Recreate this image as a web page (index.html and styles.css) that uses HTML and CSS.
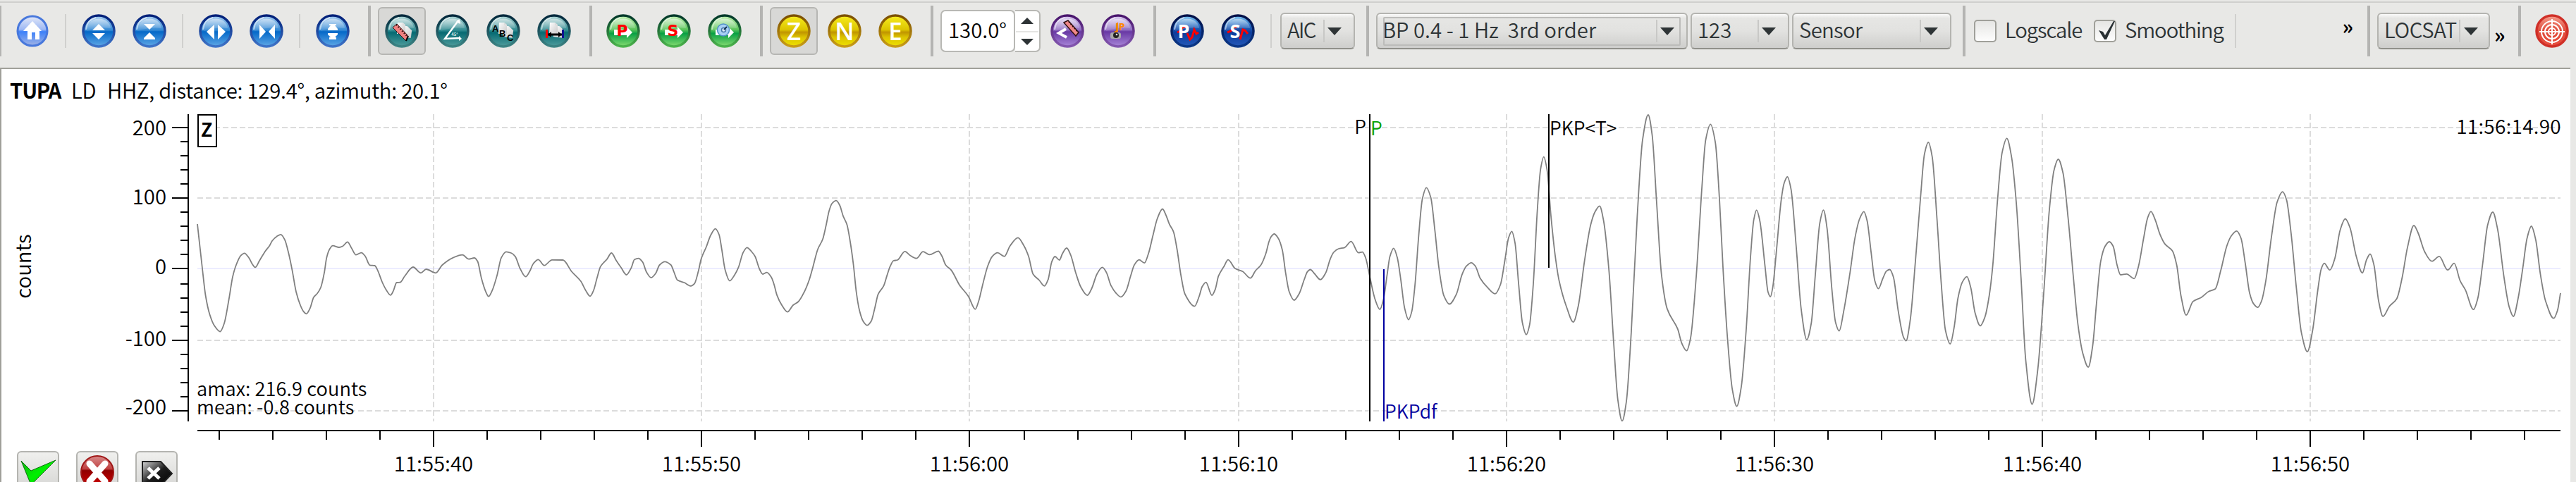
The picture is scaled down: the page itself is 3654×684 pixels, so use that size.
FILE: index.html
```html
<!DOCTYPE html>
<html lang="en">
<head>
    <meta charset="UTF-8">
    <meta name="viewport" content="width=device-width, initial-scale=1.0">
    <title>Picker - TUPA</title>
    <link rel="stylesheet" href="styles.css">
</head>
<body>

    <!-- shared gradients and icon parts -->
    <svg class="defs" width="0" height="0">
        <defs>
            <linearGradient id="gBlue" x1="0" y1="0" x2="0" y2="1">
                <stop offset="0" stop-color="#a9cdf0"/><stop offset=".48" stop-color="#3288d4"/>
                <stop offset=".52" stop-color="#0468c8"/><stop offset="1" stop-color="#5fa8e6"/>
            </linearGradient>
            <linearGradient id="rBlue" x1="0" y1="0" x2="0" y2="1">
                <stop offset="0" stop-color="#001f78"/><stop offset="1" stop-color="#3f74c8"/>
            </linearGradient>
            <linearGradient id="gHome" x1="0" y1="0" x2="0" y2="1">
                <stop offset="0" stop-color="#e4e9f8"/><stop offset=".45" stop-color="#9db8f4"/>
                <stop offset=".52" stop-color="#3b80fa"/><stop offset="1" stop-color="#a3b4e4"/>
            </linearGradient>
            <linearGradient id="gTeal" x1="0" y1="0" x2="0" y2="1">
                <stop offset="0" stop-color="#b4d8d8"/><stop offset=".48" stop-color="#2f8a90"/>
                <stop offset=".55" stop-color="#066a72"/><stop offset="1" stop-color="#4f9c9c"/>
            </linearGradient>
            <linearGradient id="rTeal" x1="0" y1="0" x2="0" y2="1">
                <stop offset="0" stop-color="#02283c"/><stop offset="1" stop-color="#3c8484"/>
            </linearGradient>
            <linearGradient id="gGreen" x1="0" y1="0" x2="0" y2="1">
                <stop offset="0" stop-color="#c4f0b4"/><stop offset=".45" stop-color="#5cc45c"/>
                <stop offset=".58" stop-color="#0aa044"/><stop offset="1" stop-color="#84dc70"/>
            </linearGradient>
            <linearGradient id="rGreen" x1="0" y1="0" x2="0" y2="1">
                <stop offset="0" stop-color="#02382a"/><stop offset="1" stop-color="#4cb44c"/>
            </linearGradient>
            <linearGradient id="gYellow" x1="0" y1="0" x2="0" y2="1">
                <stop offset="0" stop-color="#f8ee20"/><stop offset=".46" stop-color="#dcc400"/>
                <stop offset=".54" stop-color="#c09400"/><stop offset=".7" stop-color="#dcc400"/>
                <stop offset="1" stop-color="#eee000"/>
            </linearGradient>
            <linearGradient id="rYellow" x1="0" y1="0" x2="0" y2="1">
                <stop offset="0" stop-color="#7c5000"/><stop offset="1" stop-color="#c89c18"/>
            </linearGradient>
            <linearGradient id="gPurple" x1="0" y1="0" x2="0" y2="1">
                <stop offset="0" stop-color="#dccdf0"/><stop offset=".46" stop-color="#9472c4"/>
                <stop offset=".52" stop-color="#6838a4"/><stop offset="1" stop-color="#a886d8"/>
            </linearGradient>
            <linearGradient id="rPurple" x1="0" y1="0" x2="0" y2="1">
                <stop offset="0" stop-color="#48146c"/><stop offset="1" stop-color="#8458b0"/>
            </linearGradient>
            <linearGradient id="gNavy" x1="0" y1="0" x2="0" y2="1">
                <stop offset="0" stop-color="#80c8f4"/><stop offset=".3" stop-color="#2c70c4"/>
                <stop offset=".55" stop-color="#0c3c9c"/><stop offset="1" stop-color="#2458b8"/>
            </linearGradient>
            <linearGradient id="rNavy" x1="0" y1="0" x2="0" y2="1">
                <stop offset="0" stop-color="#001048"/><stop offset="1" stop-color="#0c3888"/>
            </linearGradient>
            <linearGradient id="gRed" x1="0" y1="0" x2="0" y2="1">
                <stop offset="0" stop-color="#f4a090"/><stop offset=".5" stop-color="#e04838"/>
                <stop offset="1" stop-color="#e85040"/>
            </linearGradient>
            <linearGradient id="gCancel" x1="0" y1="0" x2="0" y2="1">
                <stop offset="0" stop-color="#d88c8c"/><stop offset=".4" stop-color="#c04040"/>
                <stop offset=".45" stop-color="#900000"/><stop offset="1" stop-color="#d80000"/>
            </linearGradient>
            <linearGradient id="gCheck" x1="0" y1="0" x2="1" y2="1">
                <stop offset="0" stop-color="#10b010"/><stop offset=".5" stop-color="#00f000"/>
                <stop offset="1" stop-color="#00c800"/>
            </linearGradient>
            <linearGradient id="gSkip" x1="0" y1="0" x2="1" y2="1">
                <stop offset="0" stop-color="#d8d8d8"/><stop offset=".5" stop-color="#1c1c1c"/>
                <stop offset="1" stop-color="#000"/>
            </linearGradient>
            <linearGradient id="gPaper" x1="0" y1="0" x2="1" y2="1">
                <stop offset="0" stop-color="#fff"/><stop offset="1" stop-color="#c8c8c8"/>
            </linearGradient>
            <linearGradient id="gloss" x1="0" y1="0" x2="0" y2="1">
                <stop offset="0" stop-color="#fff" stop-opacity=".5"/>
                <stop offset="1" stop-color="#fff" stop-opacity=".06"/>
            </linearGradient>
            <g id="gl">
                <path d="M7 24C7 13 14 6.500 24 6.500S41 13 41 20Q24 18 7 24Z" fill="url(#gloss)"/>
                <path d="M6 22C7 13 12 7 20 5" fill="none" stroke="#fff" stroke-opacity=".6" stroke-width="2"/>
            </g>
            <g id="oBlue"><circle cx="24" cy="24" r="22" fill="url(#gBlue)" stroke="url(#rBlue)" stroke-width="3.500"/><use href="#gl"/></g>
            <g id="oTeal"><circle cx="24" cy="24" r="22" fill="url(#gTeal)" stroke="url(#rTeal)" stroke-width="3.500"/><use href="#gl"/></g>
            <g id="oGreen"><circle cx="24" cy="24" r="22" fill="url(#gGreen)" stroke="url(#rGreen)" stroke-width="3.500"/><use href="#gl"/></g>
            <g id="oYellow"><circle cx="24" cy="24" r="22" fill="url(#gYellow)" stroke="url(#rYellow)" stroke-width="3.500"/></g>
            <g id="oPurple"><circle cx="24" cy="24" r="22" fill="url(#gPurple)" stroke="url(#rPurple)" stroke-width="3.500"/><use href="#gl"/></g>
            <g id="oNavy"><circle cx="24" cy="24" r="22" fill="url(#gNavy)" stroke="url(#rNavy)" stroke-width="3.500"/><use href="#gl"/></g>
            <g id="paper">
                <path d="M24 17h7l7 5v11h-14z" fill="url(#gPaper)" transform="rotate(8 30 24)"/>
                <path d="M18 12h7l4 3v13H17z" fill="url(#gPaper)"/>
                <path d="M25 12l4 4h-4z" fill="#ddd"/>
            </g>
        </defs>
    </svg>

    <div class="toolbar">
        <div class="handle first"></div>
        <button class="tool"><svg viewBox="0 0 48 48">
            <circle cx="24" cy="24" r="21" fill="url(#gHome)" stroke="#4878dc" stroke-width="3"/>
            <path d="M24 10L37 24h-3v12h-6V26h-5v10h-6V24h-6z" fill="#fff"/></svg></button>
        <div class="sep"></div>
        <button class="tool"><svg viewBox="0 0 48 48"><use href="#oBlue"/>
            <path d="M15 23l9-9 9 9zM15 27h18l-9 9z" fill="#fff"/></svg></button>
        <button class="tool"><svg viewBox="0 0 48 48"><use href="#oBlue"/>
            <path d="M16 14h16l-8 8zM24 26l8 8v2H16v-2z" fill="#fff"/></svg></button>
        <div class="sep"></div>
        <button class="tool"><svg viewBox="0 0 48 48"><use href="#oBlue"/>
            <path d="M22 15v21L11 25zM27 15v21l11-11z" fill="#fff"/></svg></button>
        <button class="tool"><svg viewBox="0 0 48 48"><use href="#oBlue"/>
            <path d="M14 15l9 10-9 10zM36 15l-9 10 9 10z" fill="#fff"/></svg></button>
        <div class="sep"></div>
        <button class="tool"><svg viewBox="0 0 48 48"><use href="#oBlue"/>
            <path d="M19 14h10v2h-2l4 5v2H17v-2l4-5h-2zM17 27h14v2l-4 4h2v3H19v-3h2l-4-4z" fill="#fff"/></svg></button>

        <div class="handle"></div>
        <button class="tool checked"><svg viewBox="0 0 48 48"><use href="#oTeal"/><use href="#paper"/>
            <path d="M11 19l6-5 16 17-3 7z" fill="#f08080" stroke="#401010" stroke-width="1"/>
            <path d="M16 15l16 17" stroke="#200" stroke-width="2" stroke-dasharray="1.500 2.500"/>
            <path d="M30 38l3-7" stroke="#000" stroke-width="2"/></svg></button>
        <button class="tool"><svg viewBox="0 0 48 48"><use href="#oTeal"/>
            <path d="M33 8L13 35l22-1" fill="none" stroke="#fff" stroke-width="2.400"/>
            <path d="M29 11l5-4 1 7zM33 31l4 4-4 3z" fill="#fff"/>
            <text x="27" y="31" class="tiny">45°</text></svg></button>
        <button class="tool"><svg viewBox="0 0 48 48"><use href="#oTeal"/><use href="#paper"/>
            <text x="8" y="25" class="abc">A</text><text x="18" y="32" class="abc">B</text><text x="29" y="38" class="abc">C</text></svg></button>
        <button class="tool"><svg viewBox="0 0 48 48"><use href="#oTeal"/><use href="#paper"/>
            <path d="M15 29h20" stroke="#000" stroke-width="3"/>
            <path d="M15 29l5-4v8zM35 29l-5-4v8z"/>
            <path d="M13.500 22v12" stroke="#f00" stroke-width="3"/><path d="M36.500 22v12" stroke="#101090" stroke-width="3"/></svg></button>

        <div class="handle"></div>
        <button class="tool"><svg viewBox="0 0 48 48"><use href="#oGreen"/>
            <path d="M11 22h18v-4l8 8-8 8v-4H11z" fill="#fff"/><text x="22.500" y="30.500" class="letter red">P</text></svg></button>
        <button class="tool"><svg viewBox="0 0 48 48"><use href="#oGreen"/>
            <path d="M11 22h18v-4l8 8-8 8v-4H11z" fill="#fff"/><text x="22.500" y="30.500" class="letter red">S</text></svg></button>
        <button class="tool"><svg viewBox="0 0 48 48"><use href="#oGreen"/>
            <path d="M11 22h18v-4l8 8-8 8v-4H11z" fill="#fff"/>
            <circle cx="22" cy="22.500" r="8.500" fill="#a8d0f4" stroke="#5090c8" stroke-width="1.500"/>
            <circle cx="22.500" cy="22.500" r="3" fill="#dceeff" stroke="#4878a8" stroke-width="1.500"/>
            <path d="M23 22l4-4" stroke="#103050" stroke-width="2"/></svg></button>

        <div class="handle"></div>
        <button class="tool checked"><svg viewBox="0 0 48 48"><use href="#oYellow"/><text x="24" y="37" class="comp">Z</text></svg></button>
        <button class="tool"><svg viewBox="0 0 48 48"><use href="#oYellow"/><text x="24" y="37" class="comp">N</text></svg></button>
        <button class="tool"><svg viewBox="0 0 48 48"><use href="#oYellow"/><text x="24" y="37" class="comp">E</text></svg></button>

        <div class="handle"></div>
        <div class="spin">
            <span class="value">130.0°</span>
            <div class="steps">
                <svg viewBox="0 0 18 9"><path d="M0 9L9 0l9 9z"/></svg>
                <svg viewBox="0 0 18 9"><path d="M0 0h18L9 9z"/></svg>
            </div>
        </div>
        <button class="tool"><svg viewBox="0 0 48 48"><use href="#oPurple"/>
            <path d="M22 21l-10 6 11 6" fill="none" stroke="#fff" stroke-width="4"/>
            <path d="M19 12l6-3 15 17-4 5z" fill="#f08888" stroke="#301010" stroke-width="1.500"/>
            <path d="M26 11l13 15" stroke="#200" stroke-width="1.500" stroke-dasharray="1.500 2.500"/></svg></button>
        <button class="tool"><svg viewBox="0 0 48 48"><use href="#oPurple"/>
            <path d="M23 12v13" stroke="#ff8800" stroke-width="2"/><text x="20" y="23" class="jp">JP</text>
            <rect x="13" y="26" width="15" height="9" rx="3" fill="#a8a8a8"/>
            <circle cx="21" cy="30" r="4" fill="#222"/><circle cx="22" cy="29" r="1.300" fill="#fff"/></svg></button>

        <div class="handle"></div>
        <button class="tool"><svg viewBox="0 0 48 48"><use href="#oNavy"/>
            <path d="M10 26l4-2 4-6 5 1M24 27l4 9 3-3 3-11 3 6 3-2" class="wiggle"/>
            <text x="19" y="34" class="pick">P</text></svg></button>
        <button class="tool"><svg viewBox="0 0 48 48"><use href="#oNavy"/>
            <path d="M9 26l5-2 4-6 4 1M27 36l4-14 3 1 4 5" class="wiggle"/>
            <text x="20" y="34" class="pick">S</text></svg></button>
        <div class="sep"></div>
        <div class="combo w-aic"><span>AIC</span><i></i><b></b></div>

        <div class="handle"></div>
        <div class="combo w-filter focus"><span>BP 0.4 - 1 Hz&nbsp; 3rd order</span><i></i><b></b></div>
        <div class="combo w-unit"><span>123</span><i></i><b></b></div>
        <div class="combo w-sensor"><span>Sensor</span><i></i><b></b></div>

        <div class="handle"></div>
        <label class="check log"><span class="box"></span><span class="name">Logscale</span></label>
        <label class="check smooth"><span class="box"><svg viewBox="0 0 32 32">
            <path d="M7 15l6 2 3 5L28 2h2L18 28h-3z" fill="#2a3134"/></svg></span><span class="name">Smoothing</span></label>
        <div class="sep"></div>
        <div class="more">»</div>

        <div class="handle"></div>
        <div class="combo w-loc"><span>LOCSAT</span><i></i><b></b></div>
        <div class="more low">»</div>

        <div class="handle"></div>
        <button class="tool"><svg viewBox="0 0 48 48">
            <circle cx="24" cy="24" r="22" fill="url(#gRed)" stroke="#d03028" stroke-width="3.500"/>
            <g fill="none" stroke="#fff" stroke-width="2"><circle cx="24" cy="25" r="15"/><circle cx="24" cy="25" r="10"/>
            <circle cx="24" cy="25" r="5"/><path d="M24 7v36M6 25h36"/></g></svg></button>
    </div>

    <div class="panel">
        <div class="station"><strong>TUPA</strong><span>LD</span><span>HHZ, distance: 129.4°, azimuth: 20.1°</span></div>
        <!-- the plot is filled in by plot.js -->
        <svg class="plot" id="plot" width="3644" height="586" viewBox="2 98 3644 586"></svg>
        <div class="actions">
            <button class="action"><svg viewBox="0 0 56 56">
                <path d="M4 12l14 14L53 11 18 46z" fill="url(#gCheck)" stroke="#107010" stroke-width="1"/></svg></button>
            <button class="action"><svg viewBox="0 0 56 56">
                <circle cx="28" cy="28" r="23" fill="url(#gCancel)" stroke="#a01818" stroke-width="2"/>
                <path d="M17 16l22 25M39 16L17 41" stroke="#fff" stroke-width="9" stroke-linecap="round"/></svg></button>
            <button class="action"><svg viewBox="0 0 56 56">
                <path d="M8 13h26l16 17-16 17H8z" fill="url(#gSkip)" stroke="#222" stroke-width="2"/>
                <path d="M16 22l16 15M32 22L16 37" stroke="#fff" stroke-width="5"/></svg></button>
        </div>
    </div>

    <script src="plot.js"></script>
</body>
</html>
```
FILE: styles.css
```css
* {
    box-sizing: border-box;
}
body {
    margin: 0;
    width: 3654px;
    height: 684px;
    overflow: hidden;
    background: #e8e8e6;
    color: #2e3436;
    font-family: "Noto Sans CJK SC", "Noto Sans", sans-serif;
    font-size: 29.33px;
    font-weight: 350;
    line-height: 36px;
}
.defs {
    display: block;
}
button {
    border: none;
    background: none;
    padding: 0;
    font: inherit;
}

/* toolbar */
.toolbar {
    display: flex;
    align-items: center;
    gap: 4px;
    height: 96px;
    padding: 2px 0 10px;
    background: linear-gradient(#cfcfcd, #cfcfcd) 0 2px / 100% 2px no-repeat;
}
.handle {
    flex: none;
    width: 4px;
    height: 72px;
    margin: 0 6px 0 12px;
    background: #b4b4b2;
}
.handle.first {
    width: 2px;
    margin-left: 0;
}
.sep {
    flex: none;
    width: 2px;
    height: 48px;
    margin: 0 8px;
    background: #d0d0ce;
}
.tool {
    flex: none;
    display: flex;
    align-items: center;
    justify-content: center;
    width: 68px;
    height: 68px;
}
.tool svg {
    width: 48px;
    height: 48px;
}
.tool.checked {
    background: #d8d8d6;
    border: 2px solid #b6b6b3;
    border-radius: 6px;
}
.tool text {
    text-anchor: middle;
    font-weight: bold;
}
.tool .letter {
    font: bold 22px "DejaVu Sans", sans-serif;
}
.tool .red {
    fill: #f00;
}
.tool .comp {
    font: 600 35px "Open Sans", sans-serif;
    fill: #fff;
}
.tool .pick {
    font: bold 27px "Open Sans", sans-serif;
    fill: #fff;
}
.tool .abc {
    text-anchor: start;
    font: bold 13px "Liberation Sans", sans-serif;
}
.tool .tiny {
    font-size: 6px;
    fill: #cfe4e4;
}
.tool .jp {
    text-anchor: start;
    font: bold 14px "Open Sans", sans-serif;
    fill: #ff8800;
}
.tool .wiggle {
    fill: none;
    stroke: #f00;
    stroke-width: 3;
}

/* spin box */
.spin {
    flex: none;
    display: flex;
    width: 142px;
    height: 60px;
    color: #000;
}
.spin .value {
    width: 106px;
    padding: 7px 0 0 9px;
    border: 2px solid #b8b8b4;
    border-radius: 7px;
    background: #fff;
}
.spin .steps {
    display: flex;
    flex-direction: column;
    align-items: center;
    justify-content: space-between;
    width: 36px;
    padding: 9px 0 8px;
    border: 2px solid #b8b8b4;
    border-left: none;
    border-radius: 0 7px 7px 0;
    background: linear-gradient(#e4e4e2, #e4e4e2) 50% 28px / 32px 2px no-repeat #fff;
}
.spin svg {
    width: 18px;
    height: 9px;
    fill: #2e3436;
}

/* combo boxes */
.combo {
    flex: none;
    display: flex;
    align-items: center;
    height: 52px;
    padding: 0 17px 0 8px;
    border: 2px solid #b4b4b0;
    border-bottom-color: #90908a;
    border-radius: 6px;
    background: linear-gradient(#fafafa, #e6e6e4 12%, #e2e2e0 50%, #cececc);
    position: relative;
    white-space: pre;
}
.combo span {
    flex: 1;
    width: 0;
    margin-top: -6px;
}
.combo i {
    width: 2px;
    height: 32px;
    margin-right: 4px;
    background: #c8c8c6;
}
.combo b {
    border: 10px solid transparent;
    border-top: 11px solid #2e3436;
    border-bottom: none;
}
.combo.focus::after {
    content: "";
    position: absolute;
    inset: 4px 8px 3px;
    border: 2px solid #bcbcba;
    border-radius: 2px;
}
.w-aic {
    width: 106px;
    letter-spacing: -1.6px;
}
.w-filter {
    width: 442px;
}
.w-filter span {
    margin-left: -1px;
}
.w-unit {
    width: 140px;
}
.w-sensor {
    width: 226px;
    letter-spacing: -.7px;
}
.w-loc {
    width: 160px;
    padding-right: 15px;
    letter-spacing: -.4px;
}
.w-loc i {
    margin-right: 5px;
}

/* check boxes */
.check {
    flex: none;
    display: flex;
    align-items: center;
    gap: 12px;
    line-height: 32px;
    letter-spacing: -1.1px;
}
.check .name {
    margin-top: -7px;
}
.check.log {
    width: 166px;
    margin-left: 2px;
}
.check.smooth {
    width: 188px;
}
.box {
    width: 32px;
    height: 32px;
    border: 2px solid #a0a09a;
    border-radius: 5px;
    background: linear-gradient(#e6e6e4, #fdfdfd);
}
.box svg {
    display: block;
    margin: -2px;
    width: 32px;
    height: 32px;
}
.more {
    width: 167px;
    margin-top: -16px;
    padding-right: 4px;
    text-align: right;
    color: #000;
    font-weight: bold;
}
.more.low {
    width: 21px;
    margin-top: 8px;
    padding: 0 0 0 2px;
    text-align: left;
}

/* trace panel */
.panel {
    width: 3646px;
    height: 588px;
    border: 2px solid #a0a09a;
    border-right: none;
    border-bottom: none;
    background: #fff;
    color: #000;
    position: relative;
}
.station {
    position: absolute;
    left: 12px;
    top: 11px;
    display: flex;
    white-space: pre;
    letter-spacing: -.25px;
}
.station strong {
    width: 87px;
    letter-spacing: -1.2px;
}
.station span:nth-child(2) {
    width: 51px;
}
.plot {
    display: block;
}
.plot text {
    fill: #000;
}
.plot .small {
    font-size: 26.67px;
}
.plot .note {
    font-size: 27.2px;
    letter-spacing: .1px;
}
.plot .clock {
    font-size: 28px;
    letter-spacing: .3px;
}
.plot .end {
    text-anchor: end;
}
.plot .mid {
    text-anchor: middle;
}
.plot .bold {
    font-weight: bold;
}
.plot .green {
    fill: #00a000;
}
.plot .blue {
    fill: #0000a0;
}
.plot .grid {
    fill: none;
    stroke: #dcdcdc;
    stroke-width: 2;
    stroke-dasharray: 8 4;
}
.plot .zero {
    stroke: #ececff;
    stroke-width: 2;
}
.plot .axis {
    fill: none;
    stroke: #000;
    stroke-width: 2;
}
.plot .theo {
    stroke: #0000a0;
    stroke-width: 2;
}
.plot .trace {
    fill: none;
    stroke: #808080;
    stroke-width: 1.800;
}
.actions {
    position: absolute;
    left: 22px;
    top: 542px;
    display: flex;
    gap: 24px;
}
.action {
    width: 60px;
    height: 60px;
    border: 2px solid #b4b4b0;
    border-radius: 6px;
    background: linear-gradient(#f0f0ee, #d4d4d2);
}
.action svg {
    display: block;
    width: 56px;
    height: 56px;
}
```
FILE: plot.js
```js
const plot = document.getElementById('plot');

// trace samples as x,y pairs
const samples = `280,318 287,381 291.6,419.5 297.4,446 304,462 312.3,470.5 318,459 325,423 330,393 335,376 341.6,362.7 346.7,359.3 353,365.8 358,375 362,379.4
368,370 376.6,356 382.3,348.7 386.3,341.5 392.7,335.5 398.4,332.8 404,340.4 409.3,359 414.5,383.6 420,414 426,433 430.5,442 434.6,445.3 439.7,437.7 445,421.8
450,416.5 455,408 460,387 463.3,365.8 467.3,354 472,348.7 481,351 486,349.5 493,343.4 498.3,351.4 505,361.6 512.6,358.6 518,363.5 524.7,376.4 531.6,377
536,384.3 542,400 547.6,411 554,418.8 558,412.7 562.6,401 567.7,400.6 574,392 586,379 597,387.3 604.5,382 618,387.3 627.4,376 642.4,365.8 656,361.6
664.8,367.7 672.8,366 677.4,370.7 683,395.3 689,413.9 693,420.7 698,412.7 705,391 711,365.8 718,357.4 725,359 730.8,363.9 737.7,381 745.7,392.7
751,385.8 756.6,374 763.5,368.4 772,376.7 783,368.8 798.5,369 811,385.5 823.8,399 830.7,412 837,420.3 842,412 846.7,395 852,377.9 861,367.7
867.4,359 874,369.5 881,379.8 888.6,390 895.5,379.8 900,368.3 905.7,366.6 911.5,371.8 917,386 923.5,394 930,388 935.6,376 943,371.4 951.7,376
956,386 961,397.5 970.6,401 980,405.8 985,402.7 990.7,384.6 994.7,367 1002,350 1008,334 1014.8,324.6 1020,333 1024,355 1028.6,383 1035,398.5
1041.8,390.5 1047.5,379.4 1054,358.6 1059.6,351.3 1066,357 1071,363.8 1077.4,382 1082,389 1087.7,386.7 1094,393.3 1098,403.7 1102,418.6 1108.4,432
1117,442.6 1125,433 1132.5,428 1141,414 1148,396.8 1153,379.4 1160,353.7 1167,339.5 1172,318.7 1176,299.6 1180,289 1186,284.7 1191,291 1196,306.6
1201.4,318.7 1206,343 1210.6,376 1214.6,414 1219,440 1224.3,455.8 1230,461.7 1235.8,455.8 1241,436.7 1245.6,417.6 1253.6,405.4 1258,391.6
1262.8,377.7 1267.4,370 1273,369 1283.5,356.9 1291.5,362.8 1300,366.6 1309.3,357.2 1318.5,361.4 1331,356.5 1336.3,363.8 1341.4,376 1349.5,383.6
1361,404.4 1373.6,420.4 1383.4,438.8 1388,428 1394,403.7 1401,377.7 1407.5,363.8 1415,358.6 1424.7,363.8 1432.7,349 1444,337.4 1452,348 1459,363.8
1465.4,389 1474,397.5 1481.5,405.8 1486.7,396.8 1491.8,371.8 1496.4,364 1502.8,369 1507,360 1513,352 1518.8,362 1525.7,386.4 1533,407 1542.4,419
1548.7,409 1556,389 1563.6,379.4 1569.3,386.4 1576,405.4 1583,415.8 1590,421.4 1597.5,412.4 1603.8,391.6 1609,376 1615.8,368.7 1623.3,373.2
1629,360 1635.4,334.3 1641.7,310 1649,296.5 1653.7,304.8 1659,318.7 1664.6,329 1669.8,355 1675,389.8 1680.7,417 1694.5,434.6 1700.8,421
1705.4,406.5 1710.6,400.6 1719,419 1723.8,410.6 1728.4,391.6 1736.4,377.7 1742,368.7 1752,381 1762.8,385.3 1773.7,394.7 1781,384 1788.6,376
1795.5,360 1800,343 1803,336 1807.5,332 1813,337.8 1819,355 1823.5,386.4 1828.7,414 1835.6,426 1843,416.5 1850,396.8 1854.5,385.7 1858.6,382.5
1864.3,388 1873,396.8 1880.4,387.4 1887,367.3 1891.8,358 1898.7,353 1907.3,351.3 1916.5,342.6 1926.9,358.6 1932.6,357.6 1937,365.5 1943.5,395
1950.4,424.5 1957.3,439 1962.5,424.5 1967.6,389.8 1971.6,363.8 1976.8,352.4 1982,365.5 1987,396.8 1992.3,436.7 1998,453.7 2002.6,441.9 2007.2,403.7
2012.4,334.3 2017.6,282.3 2023.3,266.3 2029.6,280.5 2035.4,327.4 2041,379.4 2048,419.3 2056,431.5 2065.8,417.6 2073.8,389.8 2080,377.7 2087,372.8
2092.8,377.7 2099.7,395 2110,407.9 2120.9,416.9 2128.4,403.7 2134.7,369 2139.8,337.8 2144.4,328.4 2149,344.7 2154.2,403.7 2159.4,457.5 2165,474.8
2169.7,461 2174.9,403.7 2180.6,299.6 2185.2,240.6 2189.8,222.6 2194.4,240.6 2200,306.6 2205.9,362 2211.6,398.5 2221.9,435 2231.7,457 2238.6,435
2247.8,369 2256.4,318.7 2262.7,300.3 2269,292.3 2274.7,313.5 2282.2,382.9 2289,487 2294.8,566.8 2301,597.3 2306.9,570.3 2313.8,473 2322.4,306.6
2329.9,199 2337.9,163 2343.6,192 2350,289.2 2356.8,389.8 2364.9,438.4 2379.8,466.9 2385.5,487 2392.4,497.7 2398,480 2406,393.3 2414.2,264.9
2419.4,199 2426.3,176.4 2433.2,202.5 2439,282.3 2444,379.4 2450.4,480 2457.3,552.9 2463.6,576.5 2469.9,549.4 2476.8,469.6 2483,365.5 2487.7,311.8
2491.7,298.2 2496.3,313.5 2503.8,379.4 2507.8,414 2511.3,421 2514.7,407.2 2519.3,362 2526.8,282.3 2530.8,259.7 2535.4,251 2540.5,268.4 2548,351.7
2554.9,438.4 2562.9,482 2569.2,459 2575,389.8 2581.3,317 2586.5,298.2 2591.6,323.9 2598.5,410.6 2603.7,457.5 2608.8,469.6 2615.2,441.9 2624.3,386.4
2631.2,337.8 2638,310 2643.9,300.3 2648.5,313.5 2654.2,358.6 2659.4,398.5 2664.5,409.6 2670.8,395 2676,384.6 2680.6,382.5 2685.8,393.3 2692.7,441.9
2700,478.3 2703.7,483.6 2709.7,453.6 2717,370.3 2724.3,279.4 2729.8,218.8 2735.3,202 2740.8,222.6 2747.5,309.7 2753.5,400.6 2759.6,468.8 2766.3,488
2771.8,465 2777.3,423.3 2783.4,400.6 2790,392.7 2795.5,408.2 2801.6,444 2808.9,462.3 2815.6,449.8 2821.7,419.5 2826.6,377.9 2833.2,287 2839.9,216.9
2846.6,196.4 2853.3,222.6 2860,287 2866.7,393 2873.4,510.5 2882.5,573.7 2890.4,525.6 2899,415.8 2906.9,298.3 2913.6,241.5 2919.6,226 2926.3,245.3
2933.6,309.7 2941,393 2947.6,461.2 2954.3,501 2962.2,521 2968.3,491.5 2973.8,430.9 2979.9,370.3 2986,349.5 2992,343 2997.5,349.5 3003,376
3007.9,390 3016.4,388.9 3027.3,395.3 3033.4,377.9 3040.7,338 3046.2,309.7 3051,300.2 3057,311.6 3063.8,332.4 3071,346.4 3081.5,355.9 3087.6,376
3093.6,419.5 3101,447.2 3110.7,427.9 3122.2,422.2 3133.2,413.5 3142.3,410 3150.2,383.6 3158.8,348.7 3165.4,334.3 3172.7,327.9 3178.8,338 3184.9,374
3191,415.8 3196.5,430.9 3202.6,436.2 3208,427 3214,398.7 3222,336.2 3230,287 3237.8,272.2 3243.3,283.2 3250,332.4 3257.3,408.2 3264.6,472.6
3273,499 3280.4,468.8 3287.7,412 3292.6,381.7 3296.9,373.7 3304.8,383.2 3312,366.5 3319.4,326.7 3326.7,310.5 3333.4,323 3342.5,364.6 3351,387.3
3357,368.4 3362,360.5 3367.4,376 3374,427 3380.2,449 3389.3,434.7 3399.7,424 3407.6,393 3414.9,351.4 3424,320 3430,330.5 3439.2,357 3449.6,370.7
3460,363.9 3472,383.2 3481.2,373.7 3489.7,398.7 3497,411.2 3508.6,439.2 3514.7,423.3 3521.4,376 3528.7,319.2 3536,301 3542.7,324.8 3551.8,393
3559,434.7 3565.2,449 3571.9,423.3 3578.6,379.8 3584.6,338 3590.7,321 3596.8,340 3603.5,389.2 3610.8,427 3622.4,451.7 3627.8,440.4 3632,415.8`
    .trim().split(/\s+/).map(p => p.split(',').map(Number));

// monotone cubic through the samples, flat at every peak
function tracePath(pts) {
    const slopes = pts.map((p, i) => {
        if (i === 0 || i === pts.length - 1) {
            const a = pts[Math.max(i - 1, 0)];
            const b = pts[Math.min(i + 1, pts.length - 1)];
            return (b[1] - a[1]) / (b[0] - a[0]);
        }
        const l = (p[1] - pts[i - 1][1]) / (p[0] - pts[i - 1][0]);
        const r = (pts[i + 1][1] - p[1]) / (pts[i + 1][0] - p[0]);
        return l * r <= 0 ? 0 : 2 * l * r / (l + r);
    });
    let d = `M${pts[0]}`;
    for (let i = 1; i < pts.length; i++) {
        const [x0, y0] = pts[i - 1];
        const [x1, y1] = pts[i];
        const h = (x1 - x0) / 3;
        d += `C${x0 + h} ${y0 + slopes[i - 1] * h} ${x1 - h} ${y1 - slopes[i] * h} ${x1} ${y1}`;
    }
    return d;
}

const path = (cls, d) => `<path class="${cls}" d="${d}"/>`;
const text = (cls, x, y, s, extra = '') => `<text class="${cls}" x="${x}" y="${y}" ${extra}>${s}</text>`;

let out = '';

// grid
const rows = [[181, '200', 192], [281, '100', 290], [381, '0', 389], [483, '-100', 491], [583, '-200', 588]];
const times = [[615, '11:55:40'], [995, '11:55:50'], [1375, '11:56:00'], [1757, '11:56:10'],
    [2137, '11:56:20'], [2517, '11:56:30'], [2897, '11:56:40'], [3277, '11:56:50']];
rows.forEach(([y, label]) => {
    out += path(label === '0' ? 'zero' : 'grid', `M280 ${y}H3632`);
});
times.forEach(([x]) => {
    out += path('grid', `M${x} 162V598`);
});

// trace
out += path('trace', tracePath(samples));

// amplitude axis
let ticks = 'M267 162V598';
rows.forEach(([y, label, base]) => {
    ticks += `M244 ${y}H266`;
    out += text('end', 236, base, label);
});
[201, 221, 241, 261, 301, 321, 341, 361, 403, 423, 443, 463, 503, 523, 543, 563].forEach(y => {
    ticks += `M256 ${y}H266`;
});

// time axis
ticks += 'M280 611H3632';
times.forEach(([x, label]) => {
    ticks += `M${x} 611V634`;
    out += text('mid', x, 669, label);
});
for (let i = 0; i < 44; i++) {
    const x = 311 + i * 76 + (i >= 15 ? 2 : 0);
    if (i % 5 !== 4) ticks += `M${x} 611V624`;
}
out += path('axis', ticks);
out += text('mid', 0, 0, 'counts', 'transform="translate(44 378) rotate(-90)"');

// picks
out += path('axis', 'M1943 162V598M2197 162V380');
out += path('theo', 'M1963 382V598');
out += text('small end', 1938, 190, 'P');
out += text('small green', 1944, 192, 'P');
out += text('small blue', 1964, 594, 'PKPdf');
out += text('small', 2198, 192, 'PKP&lt;T&gt;');
out += text('clock end', 3633, 190, '11:56:14.90');

out += text('note', 279, 562, 'amax: 216.9 counts');
out += text('note', 279, 588, 'mean: -0.8 counts');
out += '<rect x="281" y="163" width="26" height="45" fill="#fff" stroke="#000" stroke-width="2"/>';
out += text('small bold', 285, 194, 'Z');

plot.innerHTML = out;
```
